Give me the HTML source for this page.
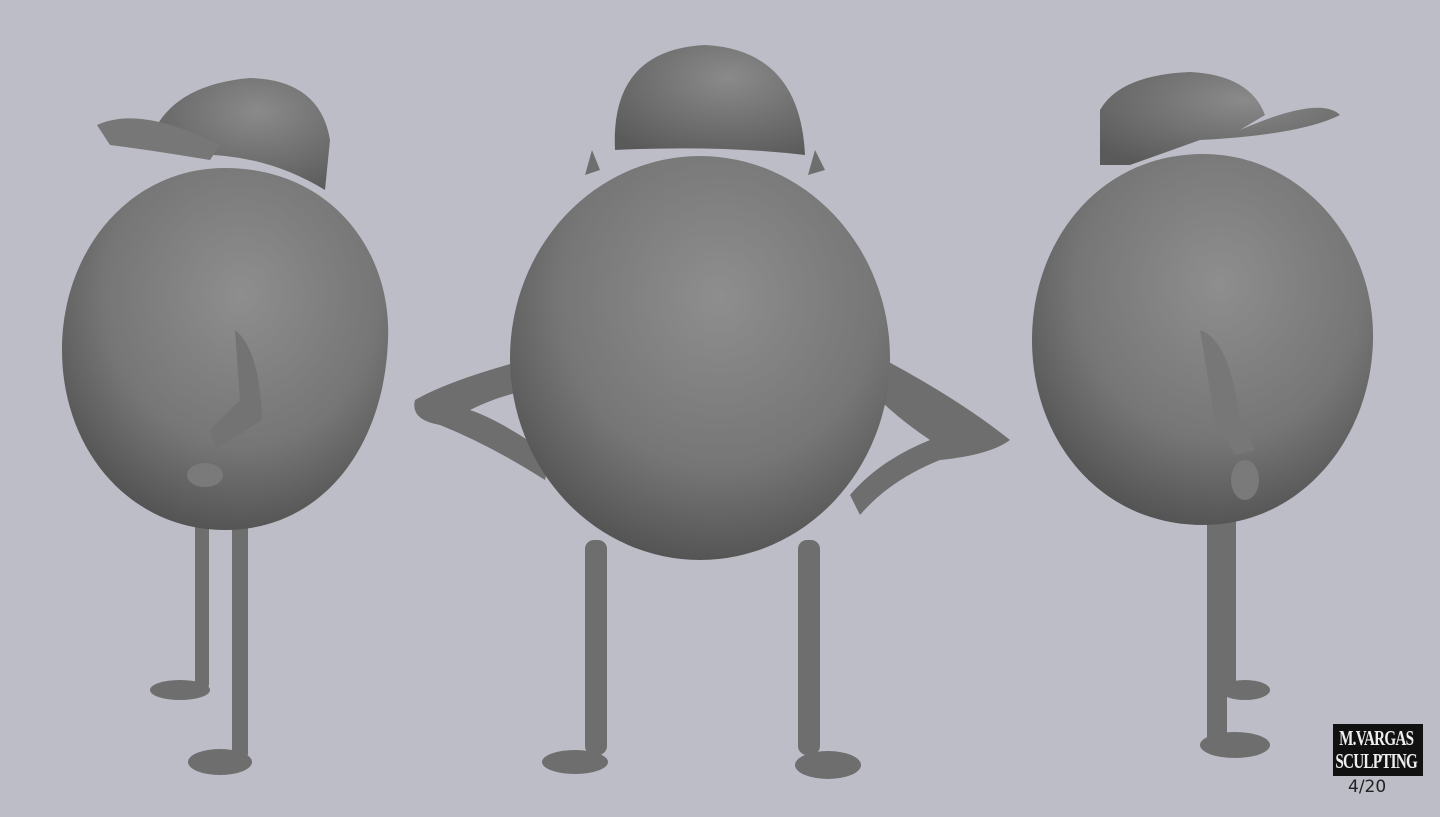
<!DOCTYPE html>
<html><head><style>
html,body{margin:0;padding:0;background:#bdbdc7;width:1440px;height:817px;overflow:hidden}
.logo{position:absolute;left:1333px;top:724px;width:90px;height:52px;background:#111;overflow:hidden}
.logo div{position:absolute;left:0;top:3px;width:120px;transform-origin:0 0;transform:scaleX(0.72);color:#eee;font-family:"Liberation Serif",serif;font-weight:bold;font-size:21px;line-height:23px;text-align:center;letter-spacing:-1px}
.num{position:absolute;left:1348px;top:777px;font-family:"DejaVu Sans",sans-serif;font-size:17px;color:#222}
</style></head><body>
<svg width="1440" height="817" style="position:absolute;left:0;top:0">
<defs>
<radialGradient id="b" cx="0.55" cy="0.35" r="0.7">
<stop offset="0" stop-color="#8e8e8e"/><stop offset="0.6" stop-color="#767676"/><stop offset="1" stop-color="#4e4e4e"/>
</radialGradient>
<radialGradient id="h" cx="0.6" cy="0.3" r="0.8">
<stop offset="0" stop-color="#8a8a8a"/><stop offset="1" stop-color="#5a5a5a"/>
</radialGradient>
</defs>
<g fill="#6e6e6e" stroke="none">
<rect x="195" y="515" width="14" height="175" rx="6"/>
<rect x="232" y="515" width="16" height="245" rx="7"/>
<ellipse cx="180" cy="690" rx="30" ry="10"/>
<ellipse cx="220" cy="762" rx="32" ry="13"/>
<path d="M225 168 C330 168 392 250 388 340 C384 450 320 530 225 530 C130 530 62 450 62 350 C62 250 130 168 225 168 Z" fill="url(#b)"/>
<path d="M235 330 Q260 350 262 420 L215 450 L210 430 L240 400 Z" fill="#737373"/>
<ellipse cx="205" cy="475" rx="18" ry="12" fill="#7a7a7a"/>
<path d="M150 140 Q170 85 250 78 Q320 80 330 140 L325 190 Q260 150 180 155 Z" fill="url(#h)"/>
<path d="M97 125 Q140 105 220 145 L210 160 Q150 150 110 145 Z" fill="#777"/>
<rect x="585" y="540" width="22" height="215" rx="9"/>
<rect x="798" y="540" width="22" height="215" rx="9"/>
<ellipse cx="575" cy="762" rx="33" ry="12"/>
<ellipse cx="828" cy="765" rx="33" ry="14"/>
<path d="M525 360 Q450 380 415 400 Q410 420 440 425 Q490 445 545 480 L550 455 Q500 420 470 410 Q500 395 530 390 Z"/>
<path d="M885 360 Q960 400 1010 440 Q990 455 940 460 Q890 480 860 515 L850 495 Q880 460 930 440 Q900 420 880 400 Z"/>
<path d="M592 150 L600 170 L585 175 Z M815 150 L825 170 L808 175 Z"/>
<ellipse cx="700" cy="358" rx="190" ry="202" fill="url(#b)"/>
<path d="M615 150 Q610 50 705 45 Q800 50 805 155 Q720 145 615 150 Z" fill="url(#h)"/>
<rect x="1207" y="505" width="20" height="240" rx="8"/>
<rect x="1222" y="505" width="14" height="185" rx="6"/>
<ellipse cx="1245" cy="690" rx="25" ry="10"/>
<ellipse cx="1235" cy="745" rx="35" ry="13"/>
<path d="M1203 154 C1300 154 1375 240 1373 340 C1371 440 1300 525 1203 525 C1100 525 1032 440 1032 340 C1032 240 1100 154 1203 154 Z" fill="url(#b)"/>
<path d="M1200 330 Q1230 340 1240 420 L1255 450 L1235 455 L1215 420 Z" fill="#777"/>
<ellipse cx="1245" cy="480" rx="14" ry="20" fill="#7a7a7a"/>
<path d="M1100 165 L1100 110 Q1120 75 1190 72 Q1250 75 1265 115 L1240 130 Q1320 95 1340 115 Q1300 135 1200 140 L1130 165 Z" fill="url(#h)"/>
</g>
</svg>
<div class="logo"><div>M.VARGAS<br>SCULPTING</div></div>
<div class="num">4/20</div>
</body></html>
